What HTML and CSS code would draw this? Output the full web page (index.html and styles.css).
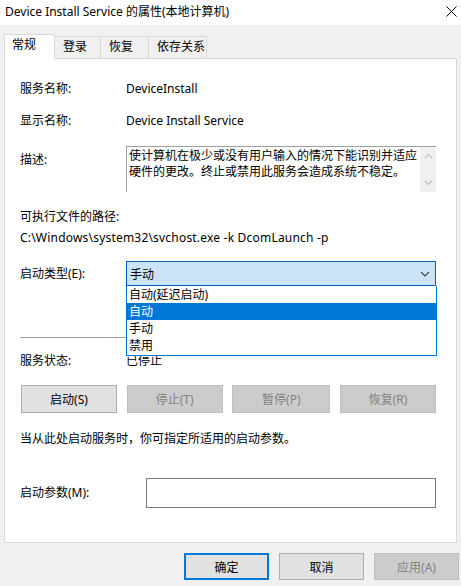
FILE: index.html
```html
<!DOCTYPE html>
<html lang="zh-CN">
<head>
<meta charset="utf-8">
<title>Device Install Service 的属性(本地计算机)</title>
<link rel="stylesheet" href="styles.css">
</head>
<body>
<div class="window">
  <div class="titlebar">
    <span class="title">Device Install Service 的属性(本地计算机)</span>
    <svg class="close" width="11" height="11" viewBox="0 0 11 11"><path d="M0.5 0.5 L10.5 10.5 M10.5 0.5 L0.5 10.5" stroke="#000" stroke-width="1" fill="none"/></svg>
  </div>
  <div class="body">
    <div class="tabs">
      <div class="tab active">常规</div>
      <div class="tab t2">登录</div>
      <div class="tab t3">恢复</div>
      <div class="tab t4">依存关系</div>
    </div>
    <div class="panel">
      <div class="row r-name"><span class="label">服务名称:</span><span class="value">DeviceInstall</span></div>
      <div class="row r-display"><span class="label">显示名称:</span><span class="value">Device Install Service</span></div>
      <div class="row r-desc">
        <span class="label desc-label">描述:</span>
        <div class="textarea">
          <div class="ta-text">使计算机在极少或没有用户输入的情况下能识别并适应硬件的更改。终止或禁用此服务会造成系统不稳定。</div>
          <div class="scrollbar">
            <svg width="9" height="6" viewBox="0 0 9 6"><path d="M1 5 L4.5 1.5 L8 5" stroke="#bdbdbd" stroke-width="1.2" fill="none"/></svg>
            <svg width="9" height="6" viewBox="0 0 9 6"><path d="M1 1 L4.5 4.5 L8 1" stroke="#bdbdbd" stroke-width="1.2" fill="none"/></svg>
          </div>
        </div>
      </div>
      <div class="path-label">可执行文件的路径:</div>
      <div class="path">C:\Windows\system32\svchost.exe -k DcomLaunch -p</div>
      <div class="row r-start">
        <span class="label">启动类型(E):</span>
        <div class="select-wrap">
          <div class="select">
            <span>手动</span>
            <svg width="10" height="6" viewBox="0 0 10 6"><path d="M1 1 L5 5 L9 1" stroke="#444" stroke-width="1.1" fill="none"/></svg>
          </div>
          <div class="dropdown">
            <div class="opt">自动(延迟启动)</div>
            <div class="opt sel">自动</div>
            <div class="opt">手动</div>
            <div class="opt">禁用</div>
          </div>
        </div>
      </div>
      <div class="sep"></div>
      <div class="row r-status"><span class="label">服务状态:</span><span class="value">已停止</span></div>
      <div class="svc-buttons">
        <div class="btn">启动(S)</div>
        <div class="btn disabled">停止(T)</div>
        <div class="btn disabled wide">暂停(P)</div>
        <div class="btn disabled">恢复(R)</div>
      </div>
      <div class="hint">当从此处启动服务时，你可指定所适用的启动参数。</div>
      <div class="row r-params">
        <span class="label params-label">启动参数(M):</span>
        <div class="input"></div>
      </div>
    </div>
    <div class="footer">
      <div class="btn fbtn default">确定</div>
      <div class="btn fbtn">取消</div>
      <div class="btn fbtn disabled">应用(A)</div>
    </div>
  </div>
</div>
</body>
</html>
```
FILE: styles.css
```css
* { box-sizing: border-box; }
html, body { margin: 0; padding: 0; }
body {
  font-family: "Noto Sans", "Noto Sans CJK SC", sans-serif;
  font-size: 12px;
  color: #000;
  background: #f0f0f0;
  width: 461px;
  height: 586px;
  overflow: hidden;
}
.window { width: 461px; height: 586px; display: flex; flex-direction: column; }
.titlebar {
  height: 25px;
  background: #fff;
  display: flex;
  align-items: center;
  justify-content: space-between;
  padding: 0 4px 0 5px;
}
.title { line-height: 20px; position: relative; top: -1px; }
.close { margin-right: 0; position: relative; top: -1px; }
.body { flex: 1; background: #f0f0f0; padding: 8px 4px 0 4px; }
.tabs { display: flex; align-items: flex-end; height: 25px; position: relative; z-index: 1; }
.tab {
  flex: none;
  height: 22px;
  line-height: 20px;
  padding: 0 0 0 8px;
  border: 1px solid #d9d9d9;
  border-bottom: none;
  border-left: none;
  background: #f0f0f0;
  white-space: nowrap;
  overflow: hidden;
}
.t2 { width: 46px; }
.t3 { width: 48px; }
.t4 { width: 58px; }
.tab.active {
  width: 51px;
  height: 25px;
  background: #fff;
  border-left: 1px solid #d9d9d9;
  padding-left: 7px;
  line-height: 20px;
  margin-bottom: -1px;
}
.panel {
  background: #fff;
  border: 1px solid #d9d9d9;
  height: 485px;
  padding: 20px 20px 0 15px;
}
.row { display: flex; }
.label { width: 106px; flex: none; line-height: 20px; }
.value { line-height: 20px; }
.r-display { margin-top: 12px; }
.r-desc { margin-top: 15px; align-items: flex-start; }
.desc-label { margin-top: 4px; }
.textarea {
  width: 311px;
  height: 46px;
  border-top: 1px solid #a0a0a0;
  border-left: 1px solid #a0a0a0;
  display: flex;
}
.ta-text { flex: 1; padding: 1px 0 0 2px; line-height: 16px; }
.scrollbar {
  width: 16px;
  background: #f0f0f0;
  display: flex;
  flex-direction: column;
  justify-content: space-between;
  align-items: center;
  padding: 6px 0 6px;
}
.path-label { margin-top: 15px; line-height: 20px; }
.path { line-height: 20px; margin-top: 1px; letter-spacing: 0.2px; }
.r-start { margin-top: 13px; align-items: center; }
.select-wrap { position: relative; width: 311px; }
.select {
  height: 25px;
  background: #cce4f7;
  border: 1px solid #005fb8;
  display: flex;
  align-items: center;
  justify-content: space-between;
  padding: 0 5px 0 3px;
}
.dropdown {
  position: absolute;
  left: 0;
  top: 25px;
  width: 311px;
  background: #fff;
  border: 1px solid #0078d7;
  border-top: none;
  z-index: 2;
  padding-bottom: 1px;
}
.opt { height: 17px; line-height: 17px; padding-left: 2px; }
.opt.sel { background: #0078d7; color: #fff; }
.sep { height: 1px; background: #a0a0a0; margin: 51px 0 0 0; width: 316px; }
.r-status { margin-top: 13px; }
.svc-buttons {
  display: flex;
  justify-content: space-between;
  margin: 14px 0 0 1px;
  width: 415px;
}
.btn {
  flex: none;
  height: 28px;
  width: 96px;
  background: #e1e1e1;
  border: 1px solid #adadad;
  display: flex;
  align-items: center;
  justify-content: center;
}
.btn.wide { width: 98px; }
.btn.disabled { background: #cccccc; border-color: #bfbfbf; color: #838383; }
.hint { margin-top: 16px; line-height: 20px; }
.r-params { margin-top: 29px; align-items: center; }
.params-label { width: 126px; }
.input { width: 291px; height: 30px; border: 1px solid #7a7a7a; background: #fff; }
.footer { display: flex; justify-content: flex-end; gap: 10px; padding: 10px 0 0 0; margin-right: -2px; }
.fbtn { width: 85px; height: 27px; }
.fbtn.default { border: 2px solid #0078d7; }
```
